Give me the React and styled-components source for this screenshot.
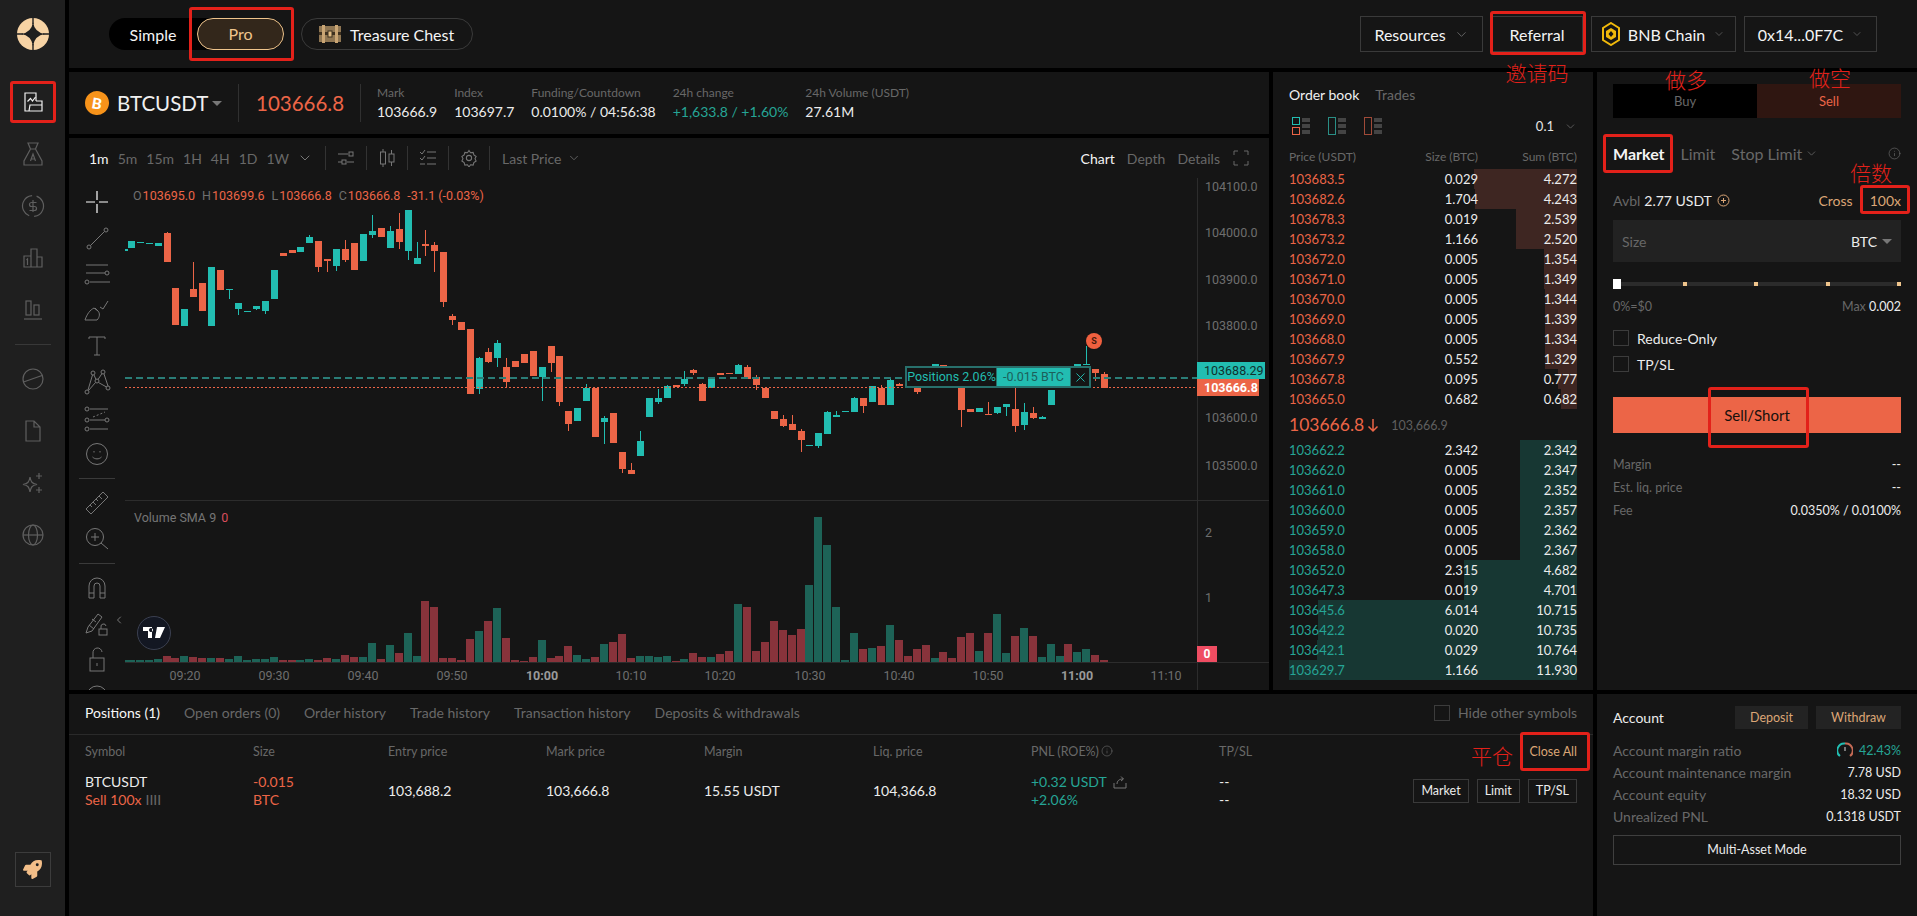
import React from "react";
import styled, { createGlobalStyle } from "styled-components";
import { ChevronDown, ChevronLeft, Info, X } from "lucide-react";
import { FaRocket } from "react-icons/fa";

const RED = "#ec6547";
const GREEN = "#25a596";
const TEAL = "#22bdb1";
const TAN = "#dca676";
const GREY = "#686868";
const WHITE = "#ececec";
const MARK = "#e3211a";

const GlobalStyle = createGlobalStyle`
  html, body { margin: 0; padding: 0; background: #000; }
  body { font-family: "Lato", "Noto Sans", "Liberation Sans", sans-serif; color: ${WHITE}; overflow: hidden; }
  * { box-sizing: border-box; }
`;

const Page = styled.div`
  position: relative;
  width: 100vw;
  height: 100vh;
  display: grid;
  grid-template-columns: 65px 1fr;
  gap: 4px;
  background: #000;
  overflow: hidden;
`;

/* ---------- sidebar ---------- */
const Sidebar = styled.aside`
  background: #1f1f1f;
  display: flex;
  flex-direction: column;
  align-items: center;
  padding-top: 18px;
`;
const Logo = styled.div`
  height: 32px;
  margin-bottom: 26px;
`;
const NavItem = styled.div`
  height: 52px;
  width: 100%;
  display: flex;
  align-items: center;
  justify-content: center;
  color: ${(p) => (p.$active ? "#f0f0f0" : "#5f5f5f")};
`;
const NavDivider = styled.div`
  width: 36px;
  height: 1px;
  background: #383838;
  margin: 8px 0;
`;
const RocketBox = styled.div`
  margin-top: auto;
  margin-bottom: 29px;
  width: 36px;
  height: 35px;
  border: 1px solid #3c3c3c;
  display: flex;
  align-items: center;
  justify-content: center;
  color: #f3be88;
  font-size: 19px;
`;
const Icon = styled.svg`
  fill: none;
  stroke: currentColor;
  stroke-width: ${(p) => p.$w || 1.2};
  display: block;
  flex: none;
`;

/* ---------- main grid ---------- */
const Main = styled.div`
  display: grid;
  grid-template-columns: 1200px 320px 320px;
  grid-template-rows: 68px 618px 222px;
  gap: 4px;
  min-width: 0;
`;
const Panel = styled.div`
  background: #151515;
  min-width: 0;
  overflow: hidden;
`;

/* ---------- header ---------- */
const Header = styled(Panel)`
  grid-column: 1 / 4;
  display: flex;
  align-items: center;
  padding: 0 40px;
`;
const ModeSwitch = styled.div`
  display: flex;
  align-items: center;
  background: #000;
  border-radius: 16px;
  height: 32px;
`;
const ModeSimple = styled.div`
  width: 88px;
  text-align: center;
  font-size: 16px;
  color: #f4f4f4;
`;
const ModePro = styled.div`
  width: 87px;
  height: 32px;
  line-height: 30px;
  text-align: center;
  font-size: 16px;
  color: #efc48c;
  background: #33271b;
  border: 1px solid #efc48c;
  border-radius: 16px;
`;
const ChestPill = styled.div`
  margin-left: 17px;
  width: 172px;
  height: 32px;
  border: 1px solid #3a3a3a;
  border-radius: 16px;
  display: flex;
  align-items: center;
  gap: 9px;
  padding-left: 17px;
  font-size: 16px;
  color: #f4f4f4;
`;
const HeaderRight = styled.div`
  margin-left: auto;
  display: flex;
  gap: 8px;
`;
const HeaderButton = styled.div`
  width: ${(p) => p.$width}px;
  height: 36px;
  border: 1px solid #3a3a3a;
  display: flex;
  align-items: center;
  justify-content: center;
  gap: 8px;
  font-size: 16px;
  color: #f4f4f4;
  svg.chev { color: #666; }
`;

/* ---------- chart column ---------- */
const ChartColumn = styled.div`
  display: grid;
  grid-template-rows: 62px 552px;
  gap: 4px;
  min-width: 0;
`;
const Ticker = styled(Panel)`
  display: flex;
  align-items: center;
  padding-left: 16px;
`;
const Coin = styled.div`
  width: 24px;
  height: 24px;
  border-radius: 50%;
  background: #f7931a;
  color: #fff;
  font-weight: 900;
  font-size: 15px;
  display: flex;
  align-items: center;
  justify-content: center;
  transform: rotate(10deg);
`;
const Symbol = styled.div`
  margin-left: 8px;
  width: 88px;
  font-size: 20.5px;
  color: #f0f0f0;
`;
const Caret = styled.div`
  width: 0;
  height: 0;
  margin-left: ${(p) => p.$left ?? 7}px;
  border-left: 5px solid transparent;
  border-right: 5px solid transparent;
  border-top: 5px solid #777;
`;
const TickDivider = styled.div`
  width: 1px;
  height: 38px;
  background: #303030;
  margin: ${(p) => p.$margin};
`;
const LastPrice = styled.div`
  font-size: 20.5px;
  color: ${RED};
  width: 88px;
`;
const Stats = styled.div`
  display: flex;
  gap: 17px;
`;
const Stat = styled.div`
  display: flex;
  flex-direction: column;
  gap: 3px;
`;
const StatLabel = styled.div`
  font-size: 12px;
  line-height: 15px;
  color: ${GREY};
`;
const StatValue = styled.div`
  font-size: 14px;
  line-height: 18px;
  color: ${(p) => p.$color || WHITE};
`;

const ChartPanel = styled(Panel)`
  display: flex;
  flex-direction: column;
`;
const ChartToolbar = styled.div`
  flex: none;
  height: 40px;
  display: flex;
  align-items: center;
  padding: 0 20px;
  font-size: 14px;
  color: ${GREY};
`;
const Intervals = styled.div`
  display: flex;
  align-items: center;
  gap: 9px;
  width: 236px;
  svg { margin-left: -1px; }
`;
const Interval = styled.span`
  color: ${(p) => (p.$active ? "#f4f4f4" : GREY)};
`;
const ToolCell = styled.div`
  width: 41px;
  height: 24px;
  border-left: 1px solid #333;
  display: flex;
  align-items: center;
  justify-content: center;
  color: #777;
`;
const LastPriceSelect = styled.div`
  border-left: 1px solid #333;
  height: 24px;
  padding-left: 12px;
  display: flex;
  align-items: center;
  gap: 5px;
`;
const ViewTabs = styled.div`
  margin-left: auto;
  display: flex;
  align-items: center;
  gap: 12px;
  svg { margin-left: 1px; }
`;
const ChartBody = styled.div`
  flex: 1;
  display: flex;
  min-height: 0;
`;
const DrawBar = styled.div`
  flex: none;
  width: 56px;
  padding-top: 6px;
  display: flex;
  flex-direction: column;
  align-items: center;
  color: #777;
  overflow: hidden;
`;
const DrawTool = styled.div`
  flex: none;
  height: 36px;
  display: flex;
  align-items: center;
  justify-content: center;
  color: ${(p) => (p.$bright ? "#fff" : "inherit")};
`;
const DrawDivider = styled.div`
  flex: none;
  width: 36px;
  height: 1px;
  background: #3a3a3a;
  margin: 6px 0;
`;
const Plot = styled.div`
  position: relative;
  flex: 1;
  min-width: 0;
  font-family: "Roboto", "Liberation Sans", sans-serif;
`;
const PlotSvg = styled.svg`
  display: block;
  width: 1144px;
  height: 512px;
  text { font-family: "Roboto", "Liberation Sans", sans-serif; }
`;
const Legend = styled.div`
  position: absolute;
  left: 8px;
  top: 10px;
  display: flex;
  gap: 7px;
  font-size: 12.5px;
  color: ${RED};
`;
const LegendKey = styled.span`
  color: #6f6f6f;
  margin-right: 1px;
`;
const VolumeLegend = styled.div`
  position: absolute;
  left: 9px;
  top: 332px;
  font-size: 12.5px;
  color: #757575;
  span { color: #d94d5c; margin-left: 5px; }
`;
const Collapse = styled.div`
  position: absolute;
  left: -12px;
  top: 433px;
  color: #777;
`;
const TvBadge = styled.div`
  position: absolute;
  left: 12px;
  top: 438px;
  width: 34px;
  height: 34px;
  border-radius: 50%;
  background: #131722;
  border: 1px solid #3b4050;
  display: flex;
  align-items: center;
  justify-content: center;
`;
const PriceTag = styled.div`
  position: absolute;
  left: 1072px;
  top: ${(p) => p.$top}px;
  width: ${(p) => p.$width}px;
  height: 17px;
  line-height: 17px;
  padding-left: 7px;
  font-size: 12.5px;
  background: ${(p) => p.$bg};
  color: ${(p) => p.$color};
  font-weight: ${(p) => p.$weight || 400};
`;
const ZeroTag = styled.div`
  position: absolute;
  left: 1072px;
  top: 468px;
  width: 20px;
  height: 16px;
  line-height: 16px;
  text-align: center;
  font-size: 12px;
  font-weight: 700;
  background: #ef4d62;
  color: #fff;
`;
const PositionTag = styled.div`
  position: absolute;
  left: 780px;
  top: 188px;
  height: 22px;
  width: 186px;
  display: flex;
  border: 2px solid #28706c;
  font-size: 12.5px;
  background: #151515;
`;
const PositionLabel = styled.div`
  width: 90px;
  text-align: center;
  line-height: 18px;
  color: ${TEAL};
  border-right: 1px solid #28706c;
`;
const PositionSize = styled.div`
  width: 73px;
  text-align: center;
  line-height: 18px;
  background: ${TEAL};
  color: #1c5f5a;
`;
const PositionClose = styled.div`
  flex: 1;
  display: flex;
  align-items: center;
  justify-content: center;
  color: ${TEAL};
  border-left: 1px solid #28706c;
`;
const SellMarker = styled.div`
  position: absolute;
  left: 961px;
  top: 155px;
  width: 16px;
  height: 16px;
  border-radius: 50%;
  background: #f0603f;
  color: #4a1a0c;
  font-size: 9px;
  font-weight: 700;
  text-align: center;
  line-height: 16px;
`;

/* ---------- order book ---------- */
const Book = styled(Panel)`
  padding-top: 12px;
`;
const BookTabs = styled.div`
  display: flex;
  gap: 16px;
  padding: 0 16px;
  height: 20px;
  align-items: center;
  font-size: 14px;
  color: ${GREY};
  span:first-child { color: #f0f0f0; }
`;
const BookControls = styled.div`
  margin-top: 12px;
  height: 20px;
  padding: 0 16px 0 19px;
  display: flex;
  align-items: center;
  gap: 18px;
  font-size: 13px;
`;
const BookStep = styled.div`
  margin-left: auto;
  display: flex;
  align-items: center;
  gap: 10px;
  color: #e6e6e6;
  svg { color: #666; }
`;
const BookGrid = styled.div`
  position: relative;
  height: ${(p) => p.$height || 20}px;
  margin: 0 16px;
  display: grid;
  grid-template-columns: 1fr 90px 99px;
  align-items: center;
  font-size: 13px;
  & > span { position: relative; }
  & > span + span { text-align: right; }
`;
const BookHead = styled(BookGrid)`
  height: 16px;
  margin-top: 12px;
  margin-bottom: 5px;
  font-size: 12px;
  color: ${GREY};
`;
const DepthBar = styled.div`
  position: absolute;
  right: 0;
  top: 0;
  bottom: 0;
  background: ${(p) => (p.$side === "ask" ? "#3e2622" : "#173733")};
`;
const PriceCell = styled.span`
  color: ${(p) => (p.$side === "ask" ? RED : GREEN)};
`;
const MidRow = styled.div`
  height: 31px;
  padding: 0 16px;
  display: flex;
  align-items: center;
  font-size: 17.5px;
  color: ${RED};
`;
const MidMark = styled.span`
  margin-left: 12px;
  margin-top: 1px;
  font-size: 12.5px;
  color: #5f5f5f;
`;

/* ---------- order form ---------- */
const Form = styled(Panel)`
  padding: 12px 16px 0;
`;
const SideSwitch = styled.div`
  display: grid;
  grid-template-columns: 144px 144px;
  height: 34px;
  font-size: 13px;
`;
const SideTab = styled.div`
  display: flex;
  align-items: center;
  justify-content: center;
  background: ${(p) => (p.$sell ? "#2f1611" : "#000")};
  color: ${(p) => (p.$sell ? RED : GREY)};
`;
const OrderTabs = styled.div`
  margin-top: 23px;
  height: 24px;
  display: flex;
  align-items: center;
  gap: 16px;
  font-size: 16px;
  color: ${GREY};
`;
const OrderTab = styled.span`
  display: flex;
  align-items: center;
  gap: 3px;
  color: ${(p) => (p.$active ? "#f4f4f4" : GREY)};
  font-weight: ${(p) => (p.$active ? 700 : 400)};
`;
const InfoSlot = styled.span`
  margin-left: auto;
  color: #666;
  display: flex;
`;
const BalanceRow = styled.div`
  margin-top: 25px;
  height: 20px;
  display: flex;
  align-items: center;
  font-size: 14px;
  color: ${GREY};
  b { font-weight: 400; color: ${WHITE}; margin: 0 5px 0 4px; }
`;
const Leverage = styled.div`
  margin-left: auto;
  display: flex;
  gap: 17px;
  color: ${TAN};
`;
const SizeInput = styled.div`
  margin-top: 10px;
  height: 42px;
  background: #222;
  display: flex;
  align-items: center;
  padding: 0 9px;
  font-size: 14px;
  color: ${GREY};
`;
const SizeUnit = styled.div`
  margin-left: auto;
  display: flex;
  align-items: center;
  color: ${WHITE};
`;
const Slider = styled.div`
  position: relative;
  margin-top: 16px;
  height: 12px;
  display: flex;
  align-items: center;
  justify-content: space-between;
  padding-left: 70px;
  &::before {
    content: "";
    position: absolute;
    left: 0;
    right: 0;
    top: 4px;
    height: 4px;
    background: #2b2b2b;
  }
`;
const SliderThumb = styled.div`
  position: absolute;
  left: 0;
  top: 1px;
  width: 8px;
  height: 10px;
  background: #fff;
`;
const SliderStop = styled.div`
  position: relative;
  width: 4px;
  height: 4px;
  background: #efc48c;
`;
const SliderLegend = styled.div`
  margin-top: 8px;
  height: 16px;
  display: flex;
  justify-content: space-between;
  align-items: center;
  font-size: 12.5px;
  color: ${GREY};
  b { font-weight: 400; color: ${WHITE}; }
`;
const CheckRow = styled.div`
  margin-top: ${(p) => p.$top}px;
  display: flex;
  align-items: center;
  gap: 8px;
  font-size: 14px;
  height: 16px;
`;
const CheckBox = styled.span`
  display: block;
  width: 16px;
  height: 16px;
  border: 1px solid #3c3c3c;
`;
const SellButton = styled.div`
  margin-top: 25px;
  height: 36px;
  background: ${RED};
  color: #17100d;
  font-size: 15px;
  display: flex;
  align-items: center;
  justify-content: center;
`;
const Details = styled.div`
  margin-top: 20px;
`;
const InfoRow = styled.div`
  height: ${(p) => p.$height}px;
  display: flex;
  align-items: center;
  justify-content: space-between;
  font-size: ${(p) => p.$label || 12.5}px;
  color: ${GREY};
  b { display: flex; align-items: center; gap: 6px; font-size: 12.5px; font-weight: 400; color: ${(p) => p.$valueColor || WHITE}; }
`;

/* ---------- positions ---------- */
const Positions = styled(Panel)`
  grid-column: 1 / 3;
`;
const PositionTabs = styled.div`
  height: 41px;
  border-bottom: 1px solid #2a2a2a;
  padding: 0 16px 3px;
  display: flex;
  align-items: center;
  gap: 24px;
  font-size: 14px;
  color: ${GREY};
`;
const PositionTab = styled.span`
  color: ${(p) => (p.$active ? "#f8f8f8" : GREY)};
`;
const HideOthers = styled.div`
  margin-left: auto;
  display: flex;
  align-items: center;
  gap: 8px;
`;
const TableGrid = styled.div`
  display: grid;
  grid-template-columns: 168px 135px 158px 158px 169px 158px 188px 100px 1fr;
  padding: 0 16px;
  align-items: center;
`;
const TableHead = styled(TableGrid)`
  height: 34px;
  padding-bottom: 2px;
  font-size: 12.5px;
  color: ${GREY};
`;
const CloseAll = styled.span`
  color: ${TAN};
  text-align: right;
`;
const PnlHead = styled.span`
  display: flex;
  align-items: center;
  gap: 2px;
`;
const TableRow = styled(TableGrid)`
  margin-top: 4px;
  height: 36px;
  font-size: 14px;
  line-height: 18px;
`;
const Line = styled.div`
  display: flex;
  align-items: center;
  gap: 6px;
  color: ${(p) => p.$color || WHITE};
  i { font-style: normal; color: ${GREY}; margin-left: -2px; }
`;
const RowActions = styled.div`
  display: flex;
  justify-content: flex-end;
  gap: 8px;
`;
const RowAction = styled.div`
  height: 24px;
  padding: 0 7px;
  line-height: 22px;
  border: 1px solid #3a3a3a;
  font-size: 12.5px;
`;

/* ---------- account ---------- */
const Account = styled(Panel)`
  padding: 12px 16px 0;
`;
const AccountHead = styled.div`
  display: flex;
  align-items: center;
  gap: 8px;
  height: 23px;
  font-size: 14px;
  span { margin-right: auto; }
`;
const AccountButton = styled.div`
  width: ${(p) => p.$width}px;
  height: 23px;
  line-height: 23px;
  background: #232323;
  color: ${TAN};
  font-size: 12.5px;
  text-align: center;
`;
const AccountRows = styled.div`
  margin-top: 10px;
`;
const MultiAsset = styled.div`
  margin-top: 8px;
  height: 30px;
  line-height: 28px;
  border: 1px solid #3f3f3f;
  text-align: center;
  font-size: 12.5px;
`;

/* ---------- red marks drawn on the screenshot ---------- */
const MarkBox = styled.div`
  position: absolute;
  left: ${(p) => p.$x}px;
  top: ${(p) => p.$y}px;
  width: ${(p) => p.$w}px;
  height: ${(p) => p.$h}px;
  border: 3px solid ${MARK};
  border-radius: 3px;
  pointer-events: none;
`;
const MarkText = styled.div`
  position: absolute;
  left: ${(p) => p.$x}px;
  top: ${(p) => p.$y}px;
  transform: translate(-50%, -50%);
  font-family: "Noto Sans CJK SC", sans-serif;
  font-size: 21px;
  font-weight: 300;
  line-height: 1;
  color: ${MARK};
  pointer-events: none;
`;

/* ---------- data ---------- */
const ASKS = [
  ["103683.5", "0.029", "4.272"], ["103682.6", "1.704", "4.243"], ["103678.3", "0.019", "2.539"],
  ["103673.2", "1.166", "2.520"], ["103672.0", "0.005", "1.354"], ["103671.0", "0.005", "1.349"],
  ["103670.0", "0.005", "1.344"], ["103669.0", "0.005", "1.339"], ["103668.0", "0.005", "1.334"],
  ["103667.9", "0.552", "1.329"], ["103667.8", "0.095", "0.777"], ["103665.0", "0.682", "0.682"],
];
const BIDS = [
  ["103662.2", "2.342", "2.342"], ["103662.0", "0.005", "2.347"], ["103661.0", "0.005", "2.352"],
  ["103660.0", "0.005", "2.357"], ["103659.0", "0.005", "2.362"], ["103658.0", "0.005", "2.367"],
  ["103652.0", "2.315", "4.682"], ["103647.3", "0.019", "4.701"], ["103645.6", "6.014", "10.715"],
  ["103642.2", "0.020", "10.735"], ["103642.1", "0.029", "10.764"], ["103629.7", "1.166", "11.930"],
];

// candles: colour, body top, body bottom, wick top, wick bottom (page pixels)
const CANDLES = [
  ["g",241,248],["g",242,243],["g",243,244],["g",243,246],["r",233,262,232],["r",288,325],["g",309,326],
  ["r",289,297,262],["r",283,311],["g",267,326],["r",270,290],["g",289,290,289,299],["g",303,309,303,315],
  ["g",311,312],["g",306,309,306,310],["g",301,311,301,314],["g",270,299],["r",253,256],["r",250,253],
  ["g",247,252],["g",237,243,235],["r",241,267,241,272],["r",259,261,259,272],["g",249,266,249,271],
  ["r",249,260,240,262],["r",243,270],["g",234,261],["g",231,235,215,238],["r",228,237],["g",231,248,226],
  ["r",229,242,213,249],["g",210,251,210,260],["g",258,264,242],["r",244,246,230,256],["r",245,251,242,272],
  ["r",252,302,252,307],["r",316,320,314,325],["r",322,330],["r",329,394],["g",358,389,357,394],
  ["r",352,362,348,363],["g",343,358,340,367],["r",367,382,358,388],["r",361,367],["r",354,363],["r",351,376],
  ["g",367,377,367,401],["r",346,363,346,372],["r",356,402,356,406],["r",411,424,411,431],["g",408,421],
  ["g",388,401,384],["r",388,437],["g",418,422,416,444],["r",413,443],["r",452,469,452,473],["r",470,474,463],
  ["g",441,456,431],["g",398,417],["g",398,402,389,404],["g",386,398,385],["r",385,387],["g",379,384,371,386],
  ["r",370,373,369,375],["r",384,401,383],["g",378,388],["r",373,375],["r",373,374],["g",365,374,364],
  ["r",367,379,365],["r",377,385,375,390],["r",388,398],["r",411,419],["r",419,426,415,427],["r",424,430,415],
  ["r",431,440,429,452],["g",445,446],["g",433,446,433,448],["g",412,434,411],["g",415,417,411],["g",411,412],
  ["g",398,412,397],["r",398,406,398,413],["g",386,402],["r",388,405,385],["g",380,405,379],["r",384,386,383],
  ["g",385,386],["r",384,392,384,394],["g",383,388],["g",364,375],["r",365,380],["r",372,385],
  ["r",388,410,388,427],["r",409,412],["g",408,412],["r",414,415,402],["g",407,413,407,414],["g",404,407,404,416],
  ["r",409,426,388,432],["g",412,425,403,430],["r",413,418,407,419],["g",417,419,416],["g",390,405],
  ["g",375,388],["r",378,388],["g",364,368],["g",364,365,346],["r",369,373,369,381],["r",374,388,372],
];

// volume bars, heights in 1/3 px
const VOLUME = ("g6 g6 g6 g9 r18 r11 g18 r15 r11 g11 r11 g8 g18 g5 g8 g8 g14 r6 r6 g5 g8 r6 r11 g9 r21 r15 g15 g57 r9 g51 r27 g87 g18 " +
  "r183 r165 r11 r11 r6 r69 g93 r123 g162 r72 r6 r3 r15 g66 r11 r18 r48 g21 g9 r15 g54 r60 r84 r11 g18 g18 g15 g18 r3 g9 r27 r15 g15 " +
  "r24 r33 g174 r165 r33 r60 r123 r96 r81 r99 g231 g435 g351 g165 g6 g87 r39 g42 r48 g111 r66 r18 r39 r51 g12 r30 r12 r75 r87 g33 r87 " +
  "g144 g27 r78 g102 r78 g15 g54 g18 r54 g30 g39 r21 r6").split(" ");

const PRICE_LABELS = [["104100.0",186],["104000.0",232],["103900.0",279],["103800.0",325],["103600.0",417],["103500.0",465]];
const TIME_LABELS = [["09:20",185],["09:30",274],["09:40",363],["09:50",452],["10:00",542,true],["10:10",631],["10:20",720],["10:30",810],["10:40",899],["10:50",988],["11:00",1077,true],["11:10",1166]];
const barX = (i) => Math.floor(131.3 + 8.93 * i);

/* ---------- drawings ---------- */
const LogoMark = () => (
  <svg width="32" height="32" viewBox="0 0 32 32">
    <circle cx="16" cy="16" r="16" fill="#f7d3a4" />
    <path d="M16 4Q17.5 14.5 28 16Q17.5 17.5 16 28Q14.5 17.5 4 16Q14.5 14.5 16 4z" fill="#1f1f1f" />
    <path d="M16 0v6M16 26v6M0 16h6M26 16h6" stroke="#1f1f1f" strokeWidth="1.4" />
  </svg>
);
const NavIcons = {
  trade: (
    <Icon width="22" height="22" viewBox="0 0 22 22">
      <path d="M8 20H3V2h11v8M7 20h13v-6H8zM14 10h6v4" />
      <path d="M5.5 10.5l3-3 2 2.5 3-4" />
    </Icon>
  ),
  bag: (
    <Icon width="22" height="26" viewBox="0 0 22 26">
      <path d="M6 2h10l-2.5 6L20 20v4H2v-4L8.500 8zM8.500 8h5" />
      <path d="M8.500 20l2.500-7 2.500 7M9.500 18h3" />
    </Icon>
  ),
  dollar: (
    <Icon width="24" height="24" viewBox="0 0 24 24">
      <circle cx="12" cy="12" r="10.500" strokeDasharray="28 5" transform="rotate(-70 12 12)" />
      <path d="M15.500 8.500h-5a2 2 0 1 0 0 4h3a2 2 0 1 1 0 4h-5M12 6v12" />
    </Icon>
  ),
  podium: (
    <Icon width="24" height="24" viewBox="0 0 24 24">
      <path d="M3 21v-11h7V3h6v8h5v10zM10 10v11M16 11v10M6.500 19v-6l-1 1" />
    </Icon>
  ),
  bars: (
    <Icon width="22" height="22" viewBox="0 0 22 22">
      <rect x="4" y="2" width="5" height="14" />
      <rect x="12" y="6" width="5" height="10" />
      <path d="M2 20h18" />
    </Icon>
  ),
  slash: (
    <Icon width="24" height="24" viewBox="0 0 24 24">
      <circle cx="12" cy="12" r="10" />
      <path d="M2.500 15L21 8.500" />
    </Icon>
  ),
  file: (
    <Icon width="20" height="24" viewBox="0 0 20 24">
      <path d="M3 2h8l6 6v14H3zM11 2v6h6" />
    </Icon>
  ),
  spark: (
    <Icon width="24" height="24" viewBox="0 0 24 24">
      <path d="M9 6C9.800 11 11 12.500 16 13.500C11 14.500 9.800 16 9 21C8.200 16 7 14.500 2 13.500C7 12.500 8.200 11 9 6z" />
      <path d="M18 2v6M15 5h6M18 16v6M15 19h6" />
    </Icon>
  ),
  globe: (
    <Icon width="24" height="24" viewBox="0 0 24 24">
      <circle cx="12" cy="12" r="10" />
      <ellipse cx="12" cy="12" rx="4.500" ry="10" />
      <path d="M2 12h20" />
    </Icon>
  ),
};
const DRAW_TOOLS = [
  <Icon width="24" height="24" viewBox="0 0 24 24"><path d="M12 1v9M12 14v9M1 12h9M14 12h9" /></Icon>,
  <Icon width="24" height="24" viewBox="0 0 24 24" $w="1"><circle cx="21" cy="4" r="2" /><circle cx="4" cy="21" r="2" /><path d="M19.500 5.500L5.500 19.500" /></Icon>,
  <Icon width="28" height="24" viewBox="0 0 28 24" $w="1"><path d="M3 3h22M3 11h19M7 20h20" /><circle cx="24" cy="11" r="2" /><circle cx="4" cy="20" r="2" /></Icon>,
  <Icon width="28" height="24" viewBox="0 0 28 24" $w="1"><path d="M2 22h12c3-3 3-7 1-9l-4-3c-4 2-7 6-9 12zM12 10l3 3M17 9l3 2 5-8" /></Icon>,
  <Icon width="20" height="24" viewBox="0 0 20 24" $w="1"><path d="M2 3h16M10 3v18M7 21h6M2 3v2M18 3v2" /></Icon>,
  <Icon width="28" height="28" viewBox="0 0 28 28" $w="1"><circle cx="4" cy="24" r="2" /><circle cx="10" cy="5" r="2" /><circle cx="14" cy="13" r="2" /><circle cx="20" cy="4" r="2" /><circle cx="25" cy="20" r="2" /><path d="M5 22L9.500 7M11 7l2 4.500M15 11.500l4-6M21 6l4 12M5.500 22.500L12.500 14.500M15.500 14.500L23.500 19" /></Icon>,
  <Icon width="28" height="28" viewBox="0 0 28 28" $w="1"><path d="M7 5h18M7 16h15M7 25h18" /><circle cx="4" cy="5" r="2" /><circle cx="4" cy="16" r="2" /><circle cx="24" cy="16" r="2" /><circle cx="4" cy="25" r="2" /><path d="M10 13l12-5" strokeDasharray="2 2" /></Icon>,
  <Icon width="24" height="24" viewBox="0 0 24 24" $w="1"><circle cx="12" cy="12" r="10.500" /><path d="M7.500 15c2.500 2.500 6.500 2.500 9 0M9 9v1.500M15 9v1.500" /></Icon>,
  "divider",
  <Icon width="26" height="26" viewBox="0 0 26 26" $w="1"><path d="M19 2l5 5L7 24l-5-5zM6 15l2 2M9 12l3 3M12 9l2 2M15 6l3 3" /></Icon>,
  <Icon width="24" height="24" viewBox="0 0 24 24" $w="1"><circle cx="10" cy="10" r="8.500" /><path d="M10 6v8M6 10h8M16 16l7 6" /></Icon>,
  "divider",
  <Icon width="20" height="24" viewBox="0 0 20 24" $w="1"><path d="M2 22V10a8 8 0 0 1 16 0v12h-5V10a3 3 0 0 0-6 0v12zM2 17h5M13 17h5" /></Icon>,
  <Icon width="26" height="26" viewBox="0 0 26 26" $w="1"><path d="M2 22l2-6L14 3l4 3L8 20zM5 14l5 4M8 8l4 3" /><rect x="15" y="18" width="8" height="6" /><path d="M17 18v-2a2.500 2.500 0 0 1 5-1" /></Icon>,
  <Icon width="20" height="26" viewBox="0 0 20 26" $w="1"><rect x="3" y="11" width="14" height="13" /><path d="M6 11V6a4.500 4.500 0 0 1 9-1M10 16v3" /></Icon>,
  <Icon width="24" height="24" viewBox="0 0 24 24" $w="1"><circle cx="12" cy="12" r="10" /></Icon>,
];
const ChestIcon = () => (
  <svg width="22" height="18" viewBox="0 0 22 18">
    <rect x="0" y="1" width="22" height="16" fill="#8f7653" />
    <rect x="0" y="7" width="22" height="3" fill="#3d3020" />
    <rect x="3" y="0" width="3" height="18" fill="#c9a574" />
    <rect x="16" y="0" width="3" height="18" fill="#c9a574" />
    <rect x="9" y="6" width="4" height="6" fill="#e2bd85" stroke="#3d3020" />
  </svg>
);
const BnbIcon = () => (
  <svg width="18" height="24" viewBox="0 0 18 24">
    <path d="M9 1l8 5v12l-8 5-8-5V6z" fill="none" stroke="#f0b90b" strokeWidth="2" />
    <path d="M9 6l5 3v6l-5 3-5-3V9z" fill="#f0b90b" />
    <path d="M9 9l2.500 3L9 15l-2.500-3z" fill="#151515" />
  </svg>
);
const BookMode = ({ top, bottom }) => (
  <svg width="18" height="20" viewBox="0 0 18 20" fill="none">
    {top && bottom && <rect x="0.500" y="1.500" width="7" height="7" stroke={TEAL} />}
    {top && bottom && <rect x="0.500" y="11.500" width="7" height="7" stroke={RED} />}
    {!!top !== !!bottom && <rect x="0.500" y="1.500" width="7" height="17" stroke={top ? "#2a8f86" : "#a04a38"} />}
    <path d="M10 2h8v4h-8zM10 8h8v4h-8zM10 14h8v4h-8z" fill="#444" />
  </svg>
);
const Gauge = () => (
  <svg width="16" height="16" viewBox="0 0 16 16" fill="none" strokeWidth="2">
    <path d="M3 14A7 7 0 0 1 8 1.500" stroke={TEAL} />
    <path d="M8 1.500A7 7 0 0 1 13 14" stroke="#c46a55" />
    <path d="M8 5v4" stroke="#999" strokeWidth="1.500" />
  </svg>
);
const ShareIcon = () => (
  <Icon width="14" height="14" viewBox="0 0 14 14" $w="1" style={{ color: "#777" }}>
    <path d="M1 8v5h12V8M4 9c0-3 2-5 6-5M8 1.500L10.500 4 8 6" />
  </Icon>
);

/* ---------- chart ---------- */
function ChartCanvas() {
  return (
    <PlotSvg viewBox="125 178 1144 512" shapeRendering="crispEdges">
      <line x1="1197.5" y1="178" x2="1197.5" y2="690" stroke="#2c2c2c" />
      <line x1="125" y1="500.5" x2="1269" y2="500.5" stroke="#2c2c2c" />
      <line x1="125" y1="662.5" x2="1269" y2="662.5" stroke="#2c2c2c" />
      <rect x="125" y="249" width="3" height="2" fill={TEAL} />
      {CANDLES.map(([c, top, bottom, wickTop, wickBottom], i) => {
        const x = barX(i);
        const fill = c === "g" ? TEAL : RED;
        return (
          <g key={i} fill={fill}>
            {(wickTop || wickBottom) && <rect x={x} y={wickTop ?? top} width="1" height={(wickBottom ?? bottom) - (wickTop ?? top)} />}
            <rect x={x - 3} y={top} width="7" height={bottom - top} />
          </g>
        );
      })}
      <line x1="125" y1="377.5" x2="1197" y2="377.5" stroke="#2a7d77" strokeWidth="2" strokeDasharray="7 4" />
      <line x1="125" y1="387.5" x2="1197" y2="387.5" stroke={RED} strokeDasharray="2 2" />
      <rect x="125" y="660" width="4" height="2" fill="#1d6357" />
      {VOLUME.map((v, i) => {
        const h = Number(v.slice(1)) / 3;
        return <rect key={i} x={barX(i) - 4} y={662 - h} width="8" height={h} fill={v[0] === "g" ? "#1d6357" : "#88333b"} />;
      })}
      {PRICE_LABELS.map(([label, y]) => (
        <text key={label} x="1205" y={y + 4.500} fontSize="12.500" fill="#6e6e6e">{label}</text>
      ))}
      <text x="1205" y="536.500" fontSize="12.500" fill="#6e6e6e">2</text>
      <text x="1205" y="601.500" fontSize="12.500" fill="#6e6e6e">1</text>
      {TIME_LABELS.map(([label, x, bold]) => (
        <text key={label} x={x} y="679.500" textAnchor="middle" fontSize="12.500" fontWeight={bold ? 700 : 400} fill={bold ? "#9a9a9a" : "#6e6e6e"}>{label}</text>
      ))}
    </PlotSvg>
  );
}

function Depth({ rows, side }) {
  return rows.map(([price, size, sum]) => (
    <BookGrid key={price + size}>
      <DepthBar $side={side} style={{ width: Number(sum) * 24.14 }} />
      <PriceCell $side={side}>{price}</PriceCell>
      <span>{size}</span>
      <span>{sum}</span>
    </BookGrid>
  ));
}

export default function App() {
  return (
    <Page>
      <GlobalStyle />
      <Sidebar>
        <Logo><LogoMark /></Logo>
        <NavItem $active>{NavIcons.trade}</NavItem>
        <NavItem>{NavIcons.bag}</NavItem>
        <NavItem>{NavIcons.dollar}</NavItem>
        <NavItem>{NavIcons.podium}</NavItem>
        <NavItem>{NavIcons.bars}</NavItem>
        <NavDivider />
        <NavItem>{NavIcons.slash}</NavItem>
        <NavItem>{NavIcons.file}</NavItem>
        <NavItem>{NavIcons.spark}</NavItem>
        <NavItem>{NavIcons.globe}</NavItem>
        <RocketBox><FaRocket /></RocketBox>
      </Sidebar>

      <Main>
        <Header>
          <ModeSwitch>
            <ModeSimple>Simple</ModeSimple>
            <ModePro>Pro</ModePro>
          </ModeSwitch>
          <ChestPill><ChestIcon />Treasure Chest</ChestPill>
          <HeaderRight>
            <HeaderButton $width={123}>Resources <ChevronDown className="chev" size={15} strokeWidth={1.5} /></HeaderButton>
            <HeaderButton $width={92}>Referral</HeaderButton>
            <HeaderButton $width={145}><BnbIcon />BNB Chain <ChevronDown className="chev" size={12} strokeWidth={1.5} /></HeaderButton>
            <HeaderButton $width={133}>0x14...0F7C <ChevronDown className="chev" size={12} strokeWidth={1.5} /></HeaderButton>
          </HeaderRight>
        </Header>

        <ChartColumn>
          <Ticker>
            <Coin>B</Coin>
            <Symbol>BTCUSDT</Symbol>
            <Caret $left={7} />
            <TickDivider $margin="0 17px 0 16px" />
            <LastPrice>103666.8</LastPrice>
            <TickDivider $margin="0 16px 0 16px" />
            <Stats>
              <Stat><StatLabel>Mark</StatLabel><StatValue>103666.9</StatValue></Stat>
              <Stat><StatLabel>Index</StatLabel><StatValue>103697.7</StatValue></Stat>
              <Stat><StatLabel>Funding/Countdown</StatLabel><StatValue>0.0100% / 04:56:38</StatValue></Stat>
              <Stat><StatLabel>24h change</StatLabel><StatValue $color={GREEN}>+1,633.8 / +1.60%</StatValue></Stat>
              <Stat><StatLabel>24h Volume (USDT)</StatLabel><StatValue>27.61M</StatValue></Stat>
            </Stats>
          </Ticker>

          <ChartPanel>
            <ChartToolbar>
              <Intervals>
                <Interval $active>1m</Interval>
                <Interval>5m</Interval>
                <Interval>15m</Interval>
                <Interval>1H</Interval>
                <Interval>4H</Interval>
                <Interval>1D</Interval>
                <Interval>1W</Interval>
                <ChevronDown size={16} strokeWidth={1.5} color="#777" />
              </Intervals>
              <ToolCell>
                <Icon width="18" height="16" viewBox="0 0 18 16" $w="1"><path d="M1 4h10M1 12h4M10 12h7" /><rect x="12" y="2" width="4" height="4" /><rect x="5" y="10" width="4" height="4" /></Icon>
              </ToolCell>
              <ToolCell>
                <Icon width="16" height="20" viewBox="0 0 16 20" $w="1"><rect x="1.500" y="4" width="5" height="12" /><rect x="10" y="6" width="5" height="8" /><path d="M4 1v3M4 16v3M12.500 2v4M12.500 14v4" /></Icon>
              </ToolCell>
              <ToolCell>
                <Icon width="18" height="18" viewBox="0 0 18 18" $w="1"><path d="M1 3l2 2 3-4M8 3h9M1 9l2 2 3-4M8 9h9M1 15h5M8 15h9" /></Icon>
              </ToolCell>
              <ToolCell>
                <Icon width="18" height="18" viewBox="0 0 24 24" $w="1.400">
                  <path d="M12 2l2 3 3.500-.5 1 3.500 3 2-1.500 3 1.500 3-3 2-1 3.500-3.500-.5-2 3-2-3-3.500.5-1-3.500-3-2 1.500-3L2.500 10l3-2 1-3.500L10 5z" />
                  <circle cx="12" cy="12" r="3.500" />
                </Icon>
              </ToolCell>
              <LastPriceSelect>Last Price <ChevronDown size={14} strokeWidth={1.5} /></LastPriceSelect>
              <ViewTabs>
                <Interval $active>Chart</Interval>
                <Interval>Depth</Interval>
                <Interval>Details</Interval>
                <Icon width="16" height="16" viewBox="0 0 16 16" $w="1"><path d="M1 5V1h4M11 1h4v4M15 11v4h-4M5 15H1v-4" /></Icon>
              </ViewTabs>
            </ChartToolbar>
            <ChartBody>
              <DrawBar>
                {DRAW_TOOLS.map((tool, i) =>
                  tool === "divider" ? <DrawDivider key={i} /> : <DrawTool key={i} $bright={i === 0}>{tool}</DrawTool>
                )}
              </DrawBar>
              <Plot>
                <ChartCanvas />
                <Legend>
                  <span><LegendKey>O</LegendKey>103695.0</span>
                  <span><LegendKey>H</LegendKey>103699.6</span>
                  <span><LegendKey>L</LegendKey>103666.8</span>
                  <span><LegendKey>C</LegendKey>103666.8</span>
                  <span>-31.1 (-0.03%)</span>
                </Legend>
                <VolumeLegend>Volume SMA 9<span>0</span></VolumeLegend>
                <Collapse><ChevronLeft size={12} /></Collapse>
                <TvBadge>
                  <svg width="22" height="12" viewBox="0 0 22 12" fill="#fff">
                    <path d="M0 0h9v11H5V4H0zM10 3a2 2 0 1 0 0 .1zM14 0h8l-5 11h-5z" />
                  </svg>
                </TvBadge>
                <SellMarker>S</SellMarker>
                <PositionTag>
                  <PositionLabel>Positions 2.06%</PositionLabel>
                  <PositionSize>-0.015 BTC</PositionSize>
                  <PositionClose><X size={15} strokeWidth={1.5} /></PositionClose>
                </PositionTag>
                <PriceTag $top={184} $width={68} $bg={TEAL} $color="#10312e">103688.29</PriceTag>
                <PriceTag $top={201} $width={62} $bg={RED} $color="#fff" $weight={700}>103666.8</PriceTag>
                <ZeroTag>0</ZeroTag>
              </Plot>
            </ChartBody>
          </ChartPanel>
        </ChartColumn>

        <Book>
          <BookTabs><span>Order book</span><span>Trades</span></BookTabs>
          <BookControls>
            <BookMode top bottom />
            <BookMode top />
            <BookMode bottom />
            <BookStep>0.1 <ChevronDown size={13} strokeWidth={1.5} /></BookStep>
          </BookControls>
          <BookHead>
            <span>Price (USDT)</span>
            <span>Size (BTC)</span>
            <span>Sum (BTC)</span>
          </BookHead>
          <Depth rows={ASKS} side="ask" />
          <MidRow>
            103666.8
            <Icon width="12" height="16" viewBox="0 0 12 16" $w="1.500" style={{ marginLeft: 3 }}><path d="M6 2v12M1.500 9.500L6 14l4.500-4.500" /></Icon>
            <MidMark>103,666.9</MidMark>
          </MidRow>
          <Depth rows={BIDS} side="bid" />
        </Book>

        <Form>
          <SideSwitch>
            <SideTab>Buy</SideTab>
            <SideTab $sell>Sell</SideTab>
          </SideSwitch>
          <OrderTabs>
            <OrderTab $active>Market</OrderTab>
            <OrderTab>Limit</OrderTab>
            <OrderTab>Stop Limit <ChevronDown size={13} strokeWidth={1.5} /></OrderTab>
            <InfoSlot><Info size={13} strokeWidth={1.3} /></InfoSlot>
          </OrderTabs>
          <BalanceRow>
            Avbl <b>2.77 USDT</b>
            <Icon width="13" height="13" viewBox="0 0 13 13" $w="1" style={{ color: TAN }}><circle cx="6.500" cy="6.500" r="5.500" /><path d="M4 6.500h5M6.500 4v5" /></Icon>
            <Leverage><span>Cross</span><span>100x</span></Leverage>
          </BalanceRow>
          <SizeInput>
            Size
            <SizeUnit>BTC<Caret $left={5} /></SizeUnit>
          </SizeInput>
          <Slider>
            <SliderThumb />
            <SliderStop />
            <SliderStop />
            <SliderStop />
            <SliderStop />
          </Slider>
          <SliderLegend>
            <span>0%=$0</span>
            <span>Max <b>0.002</b></span>
          </SliderLegend>
          <CheckRow $top={16}><CheckBox />Reduce-Only</CheckRow>
          <CheckRow $top={10}><CheckBox />TP/SL</CheckRow>
          <SellButton>Sell/Short</SellButton>
          <Details>
            <InfoRow $height={23}><span>Margin</span><b>--</b></InfoRow>
            <InfoRow $height={23}><span>Est. liq. price</span><b>--</b></InfoRow>
            <InfoRow $height={23}><span>Fee</span><b>0.0350% / 0.0100%</b></InfoRow>
          </Details>
        </Form>

        <Positions>
          <PositionTabs>
            <PositionTab $active>Positions (1)</PositionTab>
            <PositionTab>Open orders (0)</PositionTab>
            <PositionTab>Order history</PositionTab>
            <PositionTab>Trade history</PositionTab>
            <PositionTab>Transaction history</PositionTab>
            <PositionTab>Deposits &amp; withdrawals</PositionTab>
            <HideOthers><CheckBox />Hide other symbols</HideOthers>
          </PositionTabs>
          <TableHead>
            <span>Symbol</span>
            <span>Size</span>
            <span>Entry price</span>
            <span>Mark price</span>
            <span>Margin</span>
            <span>Liq. price</span>
            <PnlHead>PNL (ROE%)<Info size={12} strokeWidth={1.3} /></PnlHead>
            <span>TP/SL</span>
            <CloseAll>Close All</CloseAll>
          </TableHead>
          <TableRow>
            <div>
              <Line>BTCUSDT</Line>
              <Line $color={RED}>Sell 100x <i>IIII</i></Line>
            </div>
            <div>
              <Line $color={RED}>-0.015</Line>
              <Line $color={RED}>BTC</Line>
            </div>
            <Line>103,688.2</Line>
            <Line>103,666.8</Line>
            <Line>15.55 USDT</Line>
            <Line>104,366.8</Line>
            <div>
              <Line $color={GREEN}>+0.32 USDT <ShareIcon /></Line>
              <Line $color={GREEN}>+2.06%</Line>
            </div>
            <div>
              <Line>--</Line>
              <Line>--</Line>
            </div>
            <RowActions>
              <RowAction>Market</RowAction>
              <RowAction>Limit</RowAction>
              <RowAction>TP/SL</RowAction>
            </RowActions>
          </TableRow>
        </Positions>

        <Account>
          <AccountHead>
            <span>Account</span>
            <AccountButton $width={73}>Deposit</AccountButton>
            <AccountButton $width={85}>Withdraw</AccountButton>
          </AccountHead>
          <AccountRows>
            <InfoRow $height={22} $label={14} $valueColor={GREEN}><span>Account margin ratio</span><b><Gauge />42.43%</b></InfoRow>
            <InfoRow $height={22} $label={14}><span>Account maintenance margin</span><b>7.78 USD</b></InfoRow>
            <InfoRow $height={22} $label={14}><span>Account equity</span><b>18.32 USD</b></InfoRow>
            <InfoRow $height={22} $label={14}><span>Unrealized PNL</span><b>0.1318 USDT</b></InfoRow>
          </AccountRows>
          <MultiAsset>Multi-Asset Mode</MultiAsset>
        </Account>
      </Main>

      <MarkBox $x={189} $y={7} $w={105} $h={54} />
      <MarkBox $x={10} $y={81} $w={46} $h={42} />
      <MarkBox $x={1490} $y={11} $w={96} $h={44} />
      <MarkBox $x={1603} $y={134} $w={70} $h={39} />
      <MarkBox $x={1860} $y={185} $w={50} $h={29} />
      <MarkBox $x={1708} $y={387} $w={101} $h={61} />
      <MarkBox $x={1520} $y={732} $w={70} $h={39} />
      <MarkText $x={1537} $y={72}>邀请码</MarkText>
      <MarkText $x={1686} $y={79}>做多</MarkText>
      <MarkText $x={1830} $y={77}>做空</MarkText>
      <MarkText $x={1871} $y={172}>倍数</MarkText>
      <MarkText $x={1492} $y={755}>平仓</MarkText>
    </Page>
  );
}
